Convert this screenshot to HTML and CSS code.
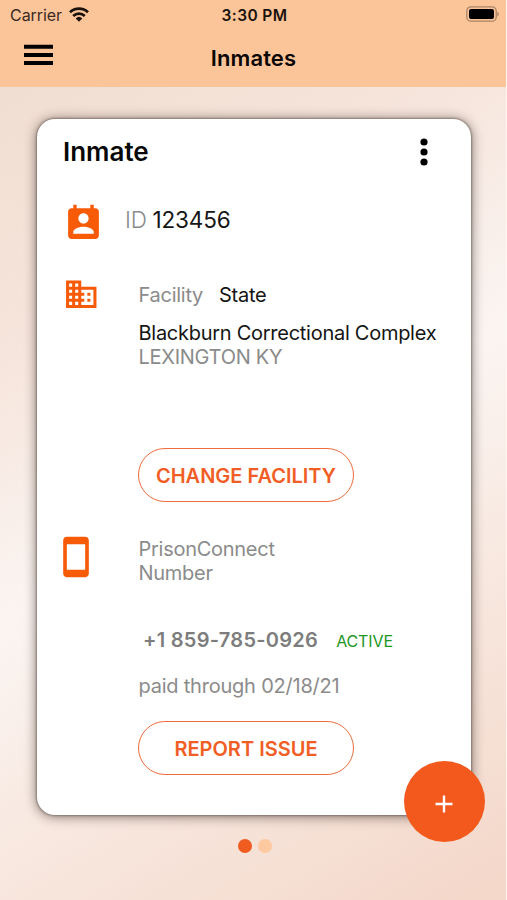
FILE: index.html
```html
<!DOCTYPE html>
<html lang="en">
<head>
<meta charset="utf-8">
<title>Inmates</title>
<link rel="stylesheet" href="styles.css">
</head>
<body>
<div class="app">
  <header class="top">
    <div class="status">
      <div class="carrier"><span class="carrier-name">Carrier</span>
        <svg class="wifi" viewBox="0 0 20 15"><g fill="none" stroke="#1a120c" stroke-width="2.700"><path d="M1 5.200a13 13 0 0 1 18 0"/><path d="M4.200 8.900a8.400 8.400 0 0 1 11.600 0"/></g><path fill="#1a120c" d="M6.700 11.400a4.800 4.800 0 0 1 6.600 0L10 14.800z"/></svg>
      </div>
      <div class="clock">3:30 PM</div>
      <svg class="battery" viewBox="0 0 33 16"><rect x=".8" y=".8" width="29.400" height="14.400" rx="4.300" fill="none" stroke="#a98567" stroke-width="1.300"/><rect x="3" y="3" width="25" height="10" rx="2" fill="#000"/><path fill="#a98567" d="M31.300 5.700c2 .8 2 3.800 0 4.600z"/></svg>
    </div>
    <div class="nav">
      <svg class="menu" viewBox="0 0 29 22"><path fill="#000" d="M0 .7h29v4H0zM0 8.900h29v4H0zM0 17.100h29v4H0z"/></svg>
      <h1 class="title">Inmates</h1>
    </div>
  </header>
  <main class="main">
    <section class="card">
      <div class="card-head">
        <h2 class="card-title">Inmate</h2>
        <svg class="more" viewBox="0 0 8 28"><circle cx="4" cy="4" r="3.600"/><circle cx="4" cy="14" r="3.600"/><circle cx="4" cy="24" r="3.600"/></svg>
      </div>
      <div class="row row-id">
        <svg class="icon icon-contact" viewBox="0 0 24 24"><path d="M19 3h-1V1h-2v2H8V1H6v2H5c-1.110 0-2 .9-2 2v14c0 1.100.89 2 2 2h14c1.100 0 2-.9 2-2V5c0-1.100-.9-2-2-2zm-7 3c1.660 0 3 1.340 3 3s-1.340 3-3 3-3-1.340-3-3 1.340-3 3-3zm6 12H6v-1c0-2 4-3.100 6-3.100s6 1.100 6 3.100v1z"/></svg>
        <div class="id-text"><span class="id-label">ID</span><span class="id-value">123456</span></div>
      </div>
      <div class="row row-facility">
        <svg class="icon icon-building" viewBox="0 0 24 24"><path d="M12 7V3H2v18h20V7H12zM6 19H4v-2h2v2zm0-4H4v-2h2v2zm0-4H4V9h2v2zm0-4H4V5h2v2zm4 12H8v-2h2v2zm0-4H8v-2h2v2zm0-4H8V9h2v2zm0-4H8V5h2v2zm10 12h-8v-2h2v-2h-2v-2h2v-2h-2V9h8v10zm-2-8h-2v2h2v-2zm0 4h-2v2h2v-2z"/></svg>
        <div class="info">
          <div class="facility-line"><span class="label">Facility</span><span>State</span></div>
          <div class="place"><span>Blackburn Correctional Complex</span><span class="label">LEXINGTON KY</span></div>
          <button class="btn">CHANGE FACILITY</button>
        </div>
      </div>
      <div class="row row-phone">
        <svg class="icon icon-phone" viewBox="0 0 24 24"><path d="M17 1.010L7 1c-1.100 0-1.990.9-1.990 2v18c0 1.100.89 2 1.990 2h10c1.100 0 2-.9 2-2V3c0-1.100-.9-1.990-2-1.990zM17 19H7V5h10v14z"/></svg>
        <div class="info">
          <div class="label number-label">PrisonConnect<br>Number</div>
          <div class="number-line"><span class="number">+1 859-785-0926</span><span class="active">ACTIVE</span></div>
          <div class="label paid">paid through 02/18/21</div>
          <button class="btn">REPORT ISSUE</button>
        </div>
      </div>
      <button class="fab" aria-label="Add"><svg viewBox="0 0 18 18"><path d="M9 .5v17M.5 9h17" stroke="#fff" stroke-width="2.400"/></svg></button>
    </section>
    <div class="dots"><i class="dot dot-on"></i><i class="dot"></i></div>
  </main>
</div>
</body>
</html>
```
FILE: styles.css
```css
* { box-sizing: border-box; }
body { margin: 0; background: #fff; font-family: Inter, "Liberation Sans", sans-serif; color: #151515; }
svg { display: block; flex: none; }
h1, h2 { margin: 0; }
.app { width: 507px; height: 900px; overflow: hidden; border-right: 1px solid #fff6f0; background: linear-gradient(149deg, #f1ded2 8%, #f6e5dc 30%, #fbf5f2 52%, #f8e9e1 70%, #f4d8ca 98%); }
.top { height: 87px; background: #fcc499; }
.status { height: 30px; padding: 0 7px 0 10px; display: grid; grid-template-columns: 1fr auto 1fr; align-items: center; font-size: 16px; color: #1a120c; }
.carrier { display: flex; gap: 6.500px; align-items: center; }
.carrier-name { color: #3a2a1f; letter-spacing: -.05px; }
.wifi { width: 20px; height: 15px; margin-top: -1px; }
.clock { font-weight: 600; font-size: 15.500px; letter-spacing: .4px; }
.battery { width: 33px; height: 16px; justify-self: end; margin-top: -2px; }
.nav { height: 57px; padding: 0 24px; display: grid; grid-template-columns: 1fr auto 1fr; align-items: center; }
.menu { width: 29px; height: 22px; margin-top: -7px; }
.title { margin: -2px 0 0 1px; font-size: 22px; line-height: 26px; font-weight: 600; color: #0b0704; letter-spacing: .1px; }
.main { padding: 31.500px 35px 0 37px; }
.card { position: relative; height: 696.500px; border-radius: 18px; background: #fff; box-shadow: 0 0 2px 1px rgba(70, 60, 55, .45), 0 1px 12px 1px rgba(50, 35, 30, .55); }
.card-head { height: 66px; padding: 0 43px 0 26px; display: flex; align-items: center; justify-content: space-between; }
.card-title { font-size: 26px; line-height: 30px; font-weight: 600; color: #080808; padding-top: 1px; }
.more { width: 8px; height: 28px; }
.row { display: flex; }
.icon { fill: #f75b08; }
.row-id { height: 91px; padding: 18px 0 0 26px; gap: 21px; }
.icon-contact { width: 41px; height: 41px; }
.id-text { display: flex; gap: 5.500px; font-size: 22.500px; line-height: 34px; letter-spacing: -.1px; }
.id-label { color: #8a8a8a; font-weight: 300; }
.row-facility { height: 257px; padding-left: 26px; gap: 39px; }
.icon-building { width: 36.500px; height: 36.500px; }
.info { display: flex; flex-direction: column; align-items: flex-start; white-space: nowrap; font-size: 20px; line-height: 23.700px; letter-spacing: -.27px; }
.label { color: #8b8b8b; }
.facility-line { display: flex; gap: 16px; padding-top: 8px; }
.place { display: flex; flex-direction: column; margin-top: 14.800px; }
.btn { width: 216px; height: 54px; margin: 78.700px 0 0 -.5px; padding: 1.500px 0 0; border: 1.500px solid #ef6d3c; border-radius: 27px; background: none; color: #f15e25; font: 600 20px/24px Inter, "Liberation Sans", sans-serif; letter-spacing: 0; }
.row-phone { padding: 2px 0 0 17px; gap: 40.500px; }
.icon-phone { width: 44px; height: 44px; }
.number-label { padding-top: 3.500px; }
.number-line { display: flex; align-items: center; gap: 18px; margin: 43px 0 0 4.500px; }
.number { font-weight: 600; color: #7d7d7d; letter-spacing: .27px; }
.active { color: #1d961f; font-size: 16px; letter-spacing: -.1px; padding-top: 2px; }
.paid { margin-top: 20.500px; letter-spacing: -.22px; }
.row-phone .btn { margin-top: 23px; }
.fab { position: absolute; right: -14px; bottom: -27px; width: 81px; height: 81px; padding: 5px 0 0; border: 0; border-radius: 50%; background: #f3591c; display: grid; place-items: center; }
.fab svg { width: 18px; height: 18px; margin-right: 1px; }
.dots { display: flex; gap: 6.500px; padding: 24px 0 0 200.500px; }
.dot { width: 14px; height: 14px; border-radius: 50%; background: #fdc9a1; }
.dot-on { background: #f05b20; }
```
